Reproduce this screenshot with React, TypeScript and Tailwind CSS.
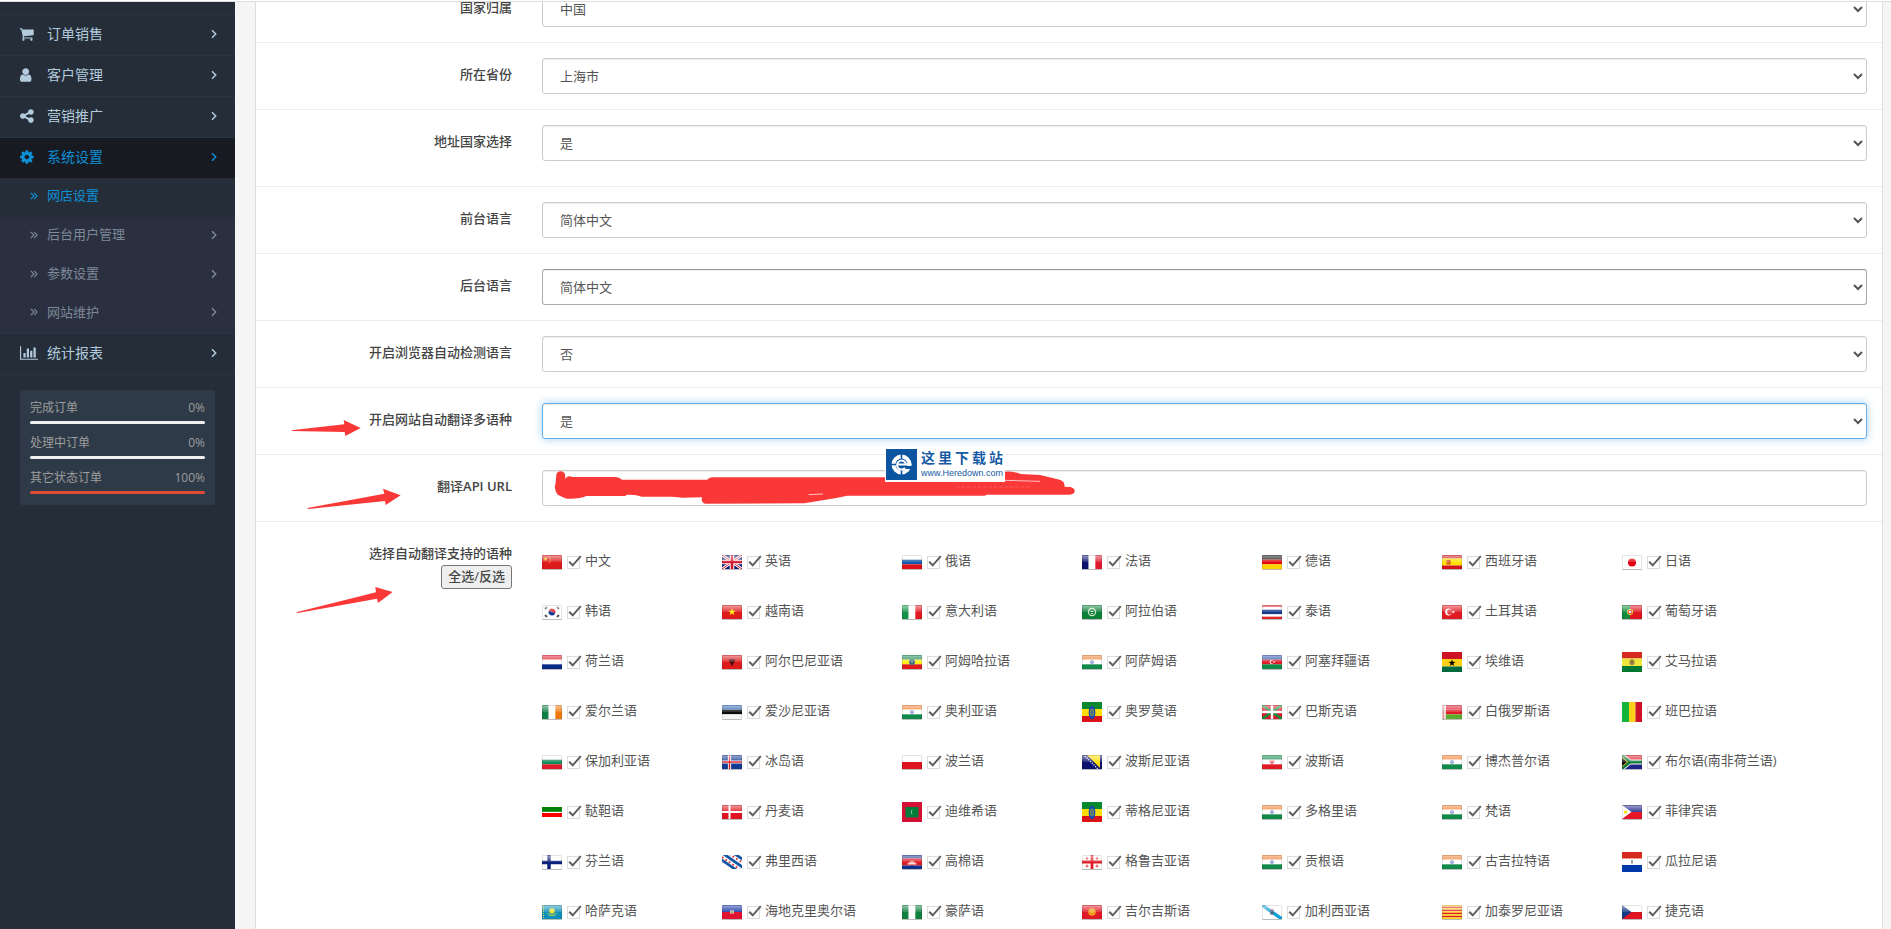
import React from "react";
import type { ReactNode } from "react";

type IconProps = { path: string; box?: string; className?: string };

const Glyph = ({ path, box = "128 0 1792 1792", className = "size-4" }: IconProps) => (
  <svg viewBox={box} className={className} fill="currentColor" aria-hidden="true">
    <path d={path} />
  </svg>
);

const CART =
  "M640 1536q0 52-38 90t-90 38-90-38-38-90 38-90 90-38 90 38 38 90zm896 0q0 52-38 90t-90 38-90-38-38-90 38-90 90-38 90 38 38 90zm128-1088v512q0 24-16.5 42.5t-40.5 21.5l-1044 122q13 60 13 70 0 16-24 64h920q26 0 45 19t19 45-19 45-45 19h-1024q-26 0-45-19t-19-45q0-11 8-31.5t16-36 21.5-40 15.5-29.5l-177-823h-204q-26 0-45-19t-19-45 19-45 45-19h256q16 0 28.5 6.5t19.5 15.5 13 24.5 8 26 5.5 29.5 4.5 26h1201q26 0 45 19t19 45z";
const USER =
  "M1536 1399q0 109-62.5 187t-150.5 78h-854q-88 0-150.5-78t-62.5-187q0-85 8.5-160.5t31.5-152 58.5-131 94-89 134.5-34.5q131 128 313 128t313-128q76 0 134.5 34.5t94 89 58.5 131 31.5 152 8.5 160.5zm-256-887q0 159-112.5 271.5t-271.5 112.5-271.5-112.5-112.5-271.5 112.5-271.5 271.5-112.5 271.5 112.5 112.5 271.5z";
const SHARE =
  "M1344 1024q133 0 226.5 93.5t93.5 226.5-93.5 226.5-226.5 93.5-226.5-93.5-93.5-226.5q0-12 2-34l-360-180q-92 86-218 86-133 0-226.5-93.5t-93.5-226.5 93.5-226.5 226.5-93.5q126 0 218 86l360-180q-2-22-2-34 0-133 93.5-226.5t226.5-93.5 226.5 93.5 93.5 226.5-93.5 226.5-226.5 93.5q-126 0-218-86l-360 180q2 22 2 34t-2 34l360 180q92-86 218-86z";
const COG =
  "M1152 896q0-106-75-181t-181-75-181 75-75 181 75 181 181 75 181-75 75-181zm512-109v222q0 12-8 23t-20 13l-185 28q-19 54-39 91 35 50 107 138 10 12 10 25t-9 23q-27 37-99 108t-94 71q-12 0-26-9l-138-108q-44 23-91 38-16 136-29 186-7 28-36 28h-222q-14 0-24.5-8.5t-11.5-21.5l-28-184q-49-16-90-37l-141 107q-10 9-25 9-14 0-25-11-126-114-165-168-7-10-7-23 0-12 8-23 15-21 51-66.5t54-70.5q-27-50-41-99l-183-27q-13-2-21-12.5t-8-23.5v-222q0-12 8-23t19-13l186-28q14-46 39-92-40-57-107-138-10-12-10-24 0-10 9-23 26-36 98.5-107.5t94.5-71.5q13 0 26 10l138 107q44-23 91-38 16-136 29-186 7-28 36-28h222q14 0 24.5 8.5t11.5 21.5l28 184q49 16 90 37l142-107q9-9 24-9 13 0 25 10 129 119 165 170 7 8 7 22 0 12-8 23-15 21-51 66.5t-54 70.5q26 50 41 98l183 28q13 2 21 12.5t8 23.5z";
const CHART =
  "M640 896v512h-256v-512h256zm384-512v1024h-256v-1024h256zm1024 1152v128h-2048v-1536h128v1408h1920zm-640-896v768h-256v-768h256zm384-384v1152h-256v-1152h256z";

const Angle = () => (
  <svg viewBox="0 0 6 10" className="h-[10px] w-[6px]" fill="none" stroke="currentColor" strokeWidth="1.5" aria-hidden="true">
    <path d="M1 1.3 4.7 5 1 8.7" />
  </svg>
);

const DoubleAngle = () => (
  <svg viewBox="0 0 8 8" className="size-2" fill="none" stroke="currentColor" strokeWidth="1.1" aria-hidden="true">
    <path d="M.8.8 4 4 .8 7.2M4 .8 7.2 4 4 7.2" />
  </svg>
);

const subItems = [
  { label: "网店设置", active: true },
  { label: "后台用户管理" },
  { label: "参数设置" },
  { label: "网站维护" },
];

const stats = [
  { label: "完成订单", value: "0%", bar: "bg-[#f0f0f0]" },
  { label: "处理中订单", value: "0%", bar: "bg-[#f0f0f0]" },
  { label: "其它状态订单", value: "100%", bar: "bg-[#e04b36]" },
];

const MenuItem = ({ icon, label, active }: { icon: ReactNode; label: string; active?: boolean }) => (
  <a
    href="#"
    className={
      active
        ? "flex h-[41px] items-center border-t border-[#2a3541] bg-[#171b21] pr-[18px] pb-[2px] pl-5 text-[#0f8fd6]"
        : "flex h-[41px] items-center border-t border-[#2a3541] pr-[18px] pb-[2px] pl-5 text-[#b3cbdd]"
    }
  >
    <span className="w-[27px]">{icon}</span>
    <span className="flex-1">{label}</span>
    <Angle />
  </a>
);

const Sidebar = () => (
  <nav className="w-[235px] shrink-0 bg-[#242d38] pt-3 text-sm">
    <MenuItem icon={<Glyph path={CART} />} label="订单销售" />
    <MenuItem icon={<Glyph path={USER} box="256 0 1792 1792" />} label="客户管理" />
    <MenuItem icon={<Glyph path={SHARE} />} label="营销推广" />
    <MenuItem icon={<Glyph path={COG} />} label="系统设置" active />
    <div className="text-[13px]">
      {subItems.map((item) => (
        <a
          key={item.label}
          href="#"
          className={
            item.active
              ? "flex h-[39px] items-center bg-[#242d38] pr-[18px] pb-1 pl-[30px] text-[#0f8fd6]"
              : "flex h-[39px] items-center bg-[#2a3040] pr-[18px] pb-1 pl-[30px] text-[#7d8898] last:h-[38px]"
          }
        >
          <span className="w-[17px]">
            <DoubleAngle />
          </span>
          <span className="flex-1">{item.label}</span>
          {!item.active && <Angle />}
        </a>
      ))}
    </div>
    <div className="border-b border-[#2a3541]">
      <MenuItem icon={<Glyph path={CHART} box="0 0 2048 1792" className="h-4 w-[18px]" />} label="统计报表" />
    </div>
    <div className="mx-5 mt-[15px] rounded-xs bg-[#2e3a47] px-[10px] pt-2 pb-[11px] text-xs text-[#9d9d9d]">
      {stats.map((s) => (
        <div key={s.label} className="h-[35px] last:h-[26px]">
          <div className="flex h-[23px] items-center justify-between pb-[3px]">
            <span>{s.label}</span>
            <span>{s.value}</span>
          </div>
          <div className={`h-[3px] rounded-xs ${s.bar}`} />
        </div>
      ))}
    </div>
  </nav>
);

/* flags, 20 x 14 */
const h = (...colors: string[]) =>
  colors.map((c, i) => <rect key={i} y={(14 / colors.length) * i} width="20" height={14 / colors.length} fill={c} />);
const v = (...colors: string[]) =>
  colors.map((c, i) => <rect key={i} x={(20 / colors.length) * i} width={20 / colors.length} height="14" fill={c} />);
const star = (cx: number, cy: number, r: number, fill: string) => {
  const pts = Array.from({ length: 10 }, (_, i) => {
    const a = (Math.PI / 5) * i - Math.PI / 2;
    const d = i % 2 ? r * 0.4 : r;
    return `${cx + d * Math.cos(a)},${cy + d * Math.sin(a)}`;
  });
  return <polygon points={pts.join(" ")} fill={fill} />;
};

const india = (
  <>
    {h("#f08030", "#fff", "#128a4a")}
    <circle cx="10" cy="7" r="1.6" fill="#a9b6de" stroke="#6f83c4" strokeWidth=".6" />
  </>
);

const flags: Record<string, ReactNode> = {
  cn: (
    <>
      {h("#de1a1a")}
      {star(3.5, 4, 2.2, "#ffe000")}
      <path d="M6.5 2h1M8 4h1M8 6h1M6.5 7.5h1" stroke="#f5b030" />
    </>
  ),
  gb: (
    <>
      {h("#0a1a6e")}
      <path d="M0 0 20 14M20 0 0 14" stroke="#fff" strokeWidth="2.8" />
      <path d="M0 0 20 14M20 0 0 14" stroke="#d0142c" strokeWidth="1" />
      <path d="M10 0V14M0 7H20" stroke="#fff" strokeWidth="4.6" />
      <path d="M10 0V14M0 7H20" stroke="#d0142c" strokeWidth="2.6" />
    </>
  ),
  ru: h("#fff", "#1557a8", "#e01018"),
  fr: v("#0b1270", "#fff", "#e01a30"),
  de: h("#111", "#e00a10", "#ffd500"),
  es: (
    <>
      {h("#d4101c", "#ffe000", "#ffe000", "#d4101c")}
      <rect x="4.5" y="5" width="4" height="4.5" fill="#c8501e" />
      <path d="M6 6v2.5" stroke="#e9b45c" />
    </>
  ),
  jp: (
    <>
      {h("#fff")}
      <circle cx="10" cy="7.5" r="4" fill="#e00010" />
    </>
  ),
  kr: (
    <>
      {h("#fff")}
      <path d="M6.6 7a3.4 3.4 0 0 1 6.8 0Z" fill="#e01a22" transform="rotate(20 10 7)" />
      <path d="M6.6 7a3.4 3.4 0 0 0 6.8 0Z" fill="#0c3c96" transform="rotate(20 10 7)" />
      <path d="m3 4 2-2M15 2l2 2M3 10l2 2M17 10l-2 2" stroke="#555" strokeWidth="2" />
    </>
  ),
  vn: (
    <>
      {h("#de1a1a")}
      {star(10, 7, 4, "#ffe600")}
    </>
  ),
  it: v("#149246", "#fff", "#e01a22"),
  arab: (
    <>
      {h("#0a8038")}
      <circle cx="10" cy="7" r="3.6" fill="none" stroke="#cfe6c8" strokeWidth="1.2" />
      <path d="M8.5 6.5h3M9 8.5h2" stroke="#cfe6c8" />
    </>
  ),
  th: h("#e0242c", "#fff", "#143a8c", "#143a8c", "#fff", "#e0242c"),
  tr: (
    <>
      {h("#e01a22")}
      <circle cx="6.6" cy="7" r="3.4" fill="#fff" />
      <circle cx="7.8" cy="7" r="2.7" fill="#e3404a" />
      {star(11.3, 7, 1.9, "#fff")}
    </>
  ),
  pt: (
    <>
      {h("#e01420")}
      <rect width="8" height="14" fill="#0f8a3c" />
      <circle cx="8" cy="7" r="3" fill="#e8d83c" />
      <rect x="6.7" y="5.4" width="2.6" height="3.2" fill="#fff" stroke="#d03030" strokeWidth=".8" />
    </>
  ),
  nl: h("#e01a28", "#fff", "#082c86"),
  al: (
    <>
      {h("#de1a1a")}
      <path d="m10 3.5 1 1L13 4l-.5 3.5-1 .5L10 11.5 8.5 8l-1-.5L7 4l2 .5Z" fill="#2b0808" opacity=".85" />
    </>
  ),
  et: (
    <>
      {h("#128a4a", "#ffee10", "#de1a1a")}
      <circle cx="10" cy="7" r="3" fill="#3c6c94" />
      {star(10, 7, 2, "#7f9a6a")}
    </>
  ),
  in: india,
  az: (
    <>
      {h("#2852a8", "#e01a28", "#128a4a")}
      <circle cx="9.5" cy="7" r="1.9" fill="#fff" />
      <circle cx="10.2" cy="7" r="1.5" fill="#e01a28" />
      {star(12.2, 7, 1.3, "#fff")}
    </>
  ),
  ie: v("#0f8044", "#fff", "#f07a0c"),
  ee: h("#2a66b8", "#0a0a0a", "#f6f6f6"),
  eu: (
    <>
      {h("#e01a24")}
      <path d="M0 0 20 14M20 0 0 14" stroke="#0f9040" strokeWidth="2.6" />
      <path d="M10 0V14M0 7H20" stroke="#fff" strokeWidth="2.4" />
    </>
  ),
  by: (
    <>
      {h("#e01a28", "#e01a28", "#5cab2c")}
      <rect width="4" height="14" fill="#f5d8d8" />
      <path d="M1.5 0V14" stroke="#d86a6a" strokeDasharray="1.5 1" />
    </>
  ),
  bg: h("#fff", "#128a5a", "#e01a28"),
  is: (
    <>
      {h("#123c94")}
      <path d="M7.5 0V14M0 7H20" stroke="#fff" strokeWidth="3.2" />
      <path d="M7.5 0V14M0 7H20" stroke="#e01a28" strokeWidth="1.4" />
    </>
  ),
  pl: h("#fff", "#e01420"),
  ba: (
    <>
      {h("#0b1270")}
      <path d="M5 0H18V13Z" fill="#ffdc00" />
      <path d="M3 1 16 14" stroke="#fff" strokeWidth="1.3" strokeDasharray="1.2 1.2" />
    </>
  ),
  ir: (
    <>
      {h("#128a4a", "#fff", "#e01a24")}
      <path d="M10 5v4M8 5.5q.2 3 2 3t2-3" stroke="#e0484c" fill="none" />
    </>
  ),
  za: (
    <>
      {h("#e01a24", "#1c2488")}
      <path d="M-1 0 8 7 -1 14M8 7H20" stroke="#fff" strokeWidth="4.8" fill="none" />
      <path d="M0 2.5 6 7 0 11.5Z" fill="#111" />
      <path d="M-1 0 8 7 -1 14M8 7H20" stroke="#127a3c" strokeWidth="3.2" fill="none" />
      <path d="M0 2.5 5.5 7 0 11.5" stroke="#e8b818" fill="none" />
    </>
  ),
  dk: (
    <>
      {h("#e01420")}
      <path d="M7.5 0V14M0 7H20" stroke="#fff" strokeWidth="2" />
    </>
  ),
  ph: (
    <>
      {h("#1c2488", "#e81428")}
      <path d="M0 0 9.5 7 0 14Z" fill="#fff" />
      <circle cx="3.5" cy="7" r="1.8" fill="#ffe000" />
    </>
  ),
  fi: (
    <>
      {h("#fff")}
      <path d="M7 0V14M0 7.5H20" stroke="#0b1f78" strokeWidth="3.4" />
    </>
  ),
  kh: (
    <>
      {h("#10308c", "#e01a28", "#e01a28", "#10308c")}
      <path d="M5.5 9.5V8.5h1V7h1v1h1V5.500h1V7h1V5.500h1V8h1V7h1v1.500h1v1Z" fill="#fbdde0" />
    </>
  ),
  ge: (
    <>
      {h("#fff")}
      <path d="M10 0V14M0 7H20" stroke="#e01a24" strokeWidth="2.8" />
      <path d="M5 2v3M3.5 3.5h3M15 2v3M13.5 3.5h3M5 9.5v3M3.5 11h3M15 9.5v3M13.5 11h3" stroke="#e04c50" />
    </>
  ),
  kz: (
    <>
      {h("#1090b4")}
      <circle cx="10" cy="6" r="2.7" fill="#f5e02c" />
      <path d="M5.5 8.5q4.5 4 9 0" stroke="#d8d848" fill="none" />
      <path d="M1.5 0V14" stroke="#d8d848" strokeDasharray="1 1" />
    </>
  ),
  ht: (
    <>
      {h("#1434a4", "#e01430")}
      <rect x="8" y="5.5" width="4" height="3" fill="#f5f0e4" />
      <path d="M8.5 7h3" stroke="#7a8a50" strokeWidth="1.5" />
    </>
  ),
  ng: v("#108040", "#fff", "#108040"),
  kg: (
    <>
      {h("#e01a24")}
      <circle cx="10" cy="7" r="3.8" fill="#f5a020" />
      <circle cx="10" cy="7" r="2" fill="#f8c028" stroke="#dd6c20" strokeWidth=".6" />
    </>
  ),
  gl: (
    <>
      {h("#fff")}
      <path d="M0 0 20 14" stroke="#10a0d8" strokeWidth="3.4" />
      <rect x="8.2" y="4.2" width="3.6" height="5.6" rx="1.5" fill="#4f6f8c" />
      <path d="M9 4.5h2" stroke="#c86a50" />
    </>
  ),
  ct: h("#ffd81c", "#e01a20", "#ffd81c", "#e01a20", "#ffd81c", "#e01a20", "#ffd81c", "#e01a20", "#ffd81c"),
  cz: (
    <>
      {h("#fff", "#e01420")}
      <path d="M0 0 9.5 7 0 14Z" fill="#123a88" />
    </>
  ),
};

/* flat flags without gloss, [height, drawing] */
const ethiopia = (
  <>
    <rect width="20" height="7" fill="#078930" />
    <rect y="7" width="20" height="7" fill="#fcdd09" />
    <rect y="14" width="20" height="6" fill="#da121a" />
    <ellipse cx="10" cy="10.5" rx="3.3" ry="6.8" fill="#0f47af" />
    <ellipse cx="10" cy="10.5" rx="1.6" ry="3.6" fill="none" stroke="#b5b13c" strokeWidth=".8" />
    <path d="M10 7v7" stroke="#7c9060" />
  </>
);

const flatFlags: Record<string, [number, ReactNode]> = {
  gh: [
    20,
    <>
      <rect width="20" height="7" fill="#ce1126" />
      <rect y="7" width="20" height="7.5" fill="#fcd116" />
      <rect y="14.5" width="20" height="5.5" fill="#006b3f" />
      {star(10, 11, 3.6, "#000")}
    </>,
  ],
  bo: [
    20,
    <>
      <rect width="20" height="6.5" fill="#d52b1e" />
      <rect y="6.5" width="20" height="7.5" fill="#f0e63c" />
      <rect y="14" width="20" height="6" fill="#007934" />
      <ellipse cx="10" cy="10.3" rx="2.5" ry="3" fill="#8a9048" />
      <ellipse cx="10" cy="10.3" rx="1.2" ry="1.6" fill="#b7683c" />
    </>,
  ],
  om: [20, ethiopia],
  ml: [
    20,
    <>
      <rect width="7" height="20" fill="#14b53a" />
      <rect x="7" width="6.5" height="20" fill="#fcd116" />
      <rect x="13.5" width="6.5" height="20" fill="#ce1126" />
    </>,
  ],
  tt: [
    10,
    <>
      <rect width="20" height="10" fill="#fff" />
      <rect width="20" height="4.8" fill="#008000" />
      <rect y="6" width="20" height="4" fill="#f00" />
    </>,
  ],
  mv: [
    20,
    <>
      <rect width="20" height="20" fill="#d21034" />
      <rect x="3.5" y="5" width="13" height="10.5" fill="#007e3a" />
      <path d="M10.8 7.5a3 3 0 0 0 0 5.5 4 4 0 0 1 0-5.5Z" fill="#fff" />
    </>,
  ],
  fy: [
    14,
    <>
      <rect width="20" height="14" fill="#fff" />
      <path d="M-4-5 26 16M-6 1 20 19M4-7 32 12" stroke="#1358a4" strokeWidth="2.8" />
      <path d="M0 2 18 14.5M7-1 21 8" stroke="#e8383c" strokeWidth="1.8" strokeDasharray="1.8 2.4" />
    </>,
  ],
  py: [
    20,
    <>
      <rect width="20" height="20" fill="#fff" />
      <rect width="20" height="6.5" fill="#d52b1e" />
      <rect y="13" width="20" height="7" fill="#0038a8" />
      <path d="M10 8v3.5" stroke="#8fa080" strokeWidth="1.8" />
    </>,
  ],
};

const Flag = ({ code }: { code: string }) => {
  const flat = flatFlags[code];
  if (flat) {
    return (
      <svg viewBox={`0 0 20 ${flat[0]}`} width="20" height={flat[0]} aria-hidden="true">
        {flat[1]}
      </svg>
    );
  }
  return (
    <svg viewBox="0 0 20 15" width="20" height="15" className="overflow-hidden rounded-[1px]" aria-hidden="true">
      <defs>
        <linearGradient id="gloss" x1="0" y1="0" x2="0" y2="1">
          <stop offset="0" stopColor="#fff" stopOpacity=".3" />
          <stop offset=".2" stopColor="#fff" stopOpacity=".5" />
          <stop offset="1" stopColor="#fff" stopOpacity=".12" />
        </linearGradient>
        <clipPath id="cloth">
          <rect width="20" height="14" />
        </clipPath>
      </defs>
      <g clipPath="url(#cloth)">{flags[code]}</g>
      <rect width="20" height="7" fill="url(#gloss)" />
      <rect x=".5" y=".5" width="19" height="14" rx=".5" fill="none" stroke="#000" strokeOpacity=".1" />
      <rect y="14" width="20" height="1" fill="#bbb" />
    </svg>
  );
};

const languages: [string, string][] = [
  ["cn", "中文"], ["gb", "英语"], ["ru", "俄语"], ["fr", "法语"], ["de", "德语"], ["es", "西班牙语"], ["jp", "日语"],
  ["kr", "韩语"], ["vn", "越南语"], ["it", "意大利语"], ["arab", "阿拉伯语"], ["th", "泰语"], ["tr", "土耳其语"], ["pt", "葡萄牙语"],
  ["nl", "荷兰语"], ["al", "阿尔巴尼亚语"], ["et", "阿姆哈拉语"], ["in", "阿萨姆语"], ["az", "阿塞拜疆语"], ["gh", "埃维语"], ["bo", "艾马拉语"],
  ["ie", "爱尔兰语"], ["ee", "爱沙尼亚语"], ["in", "奥利亚语"], ["om", "奥罗莫语"], ["eu", "巴斯克语"], ["by", "白俄罗斯语"], ["ml", "班巴拉语"],
  ["bg", "保加利亚语"], ["is", "冰岛语"], ["pl", "波兰语"], ["ba", "波斯尼亚语"], ["ir", "波斯语"], ["in", "博杰普尔语"], ["za", "布尔语(南非荷兰语)"],
  ["tt", "鞑靼语"], ["dk", "丹麦语"], ["mv", "迪维希语"], ["om", "蒂格尼亚语"], ["in", "多格里语"], ["in", "梵语"], ["ph", "菲律宾语"],
  ["fi", "芬兰语"], ["fy", "弗里西语"], ["kh", "高棉语"], ["ge", "格鲁吉亚语"], ["in", "贡根语"], ["in", "古吉拉特语"], ["py", "瓜拉尼语"],
  ["kz", "哈萨克语"], ["ht", "海地克里奥尔语"], ["ng", "豪萨语"], ["kg", "吉尔吉斯语"], ["gl", "加利西亚语"], ["ct", "加泰罗尼亚语"], ["cz", "捷克语"],
];

const Language = ({ code, name }: { code: string; name: string }) => (
  <label className="flex h-[50px] w-[180px] items-center whitespace-nowrap">
    <Flag code={code} />
    <span className="relative mr-[5px] ml-[5px] size-[13px]">
      <input
        type="checkbox"
        defaultChecked
        className="peer block size-[13px] appearance-none border border-[#dcdcdc] bg-white"
      />
      <svg
        viewBox="0 0 14 14"
        className="pointer-events-none absolute -top-px left-px hidden size-[14px] peer-checked:block"
        fill="none"
        stroke="#5f5f5f"
        strokeWidth="2"
        aria-hidden="true"
      >
        <path d="M1.2 6.8 4.7 10.3 12.8 1.2" />
      </svg>
    </span>
    <span className="pb-[2px]">{name}</span>
  </label>
);

const Arrow = ({ box, points, className }: { box: string; points: string; className: string }) => (
  <svg viewBox={box} className={`pointer-events-none absolute ${className}`} aria-hidden="true">
    <polygon points={points} fill="#fb3838" />
  </svg>
);

const field = "block h-9 w-full rounded-[3px] border bg-white px-[13px] text-[13px] text-[#555] outline-none";
const plain = "border-[#ccc] shadow-[inset_0_1px_1px_rgba(0,0,0,0.075)]";
const hovered = "border-[#aaa] border-t-[#999] shadow-[inset_0_1px_1px_rgba(0,0,0,0.075)]";
const focused = "border-[#66afe9] shadow-[inset_0_1px_1px_rgba(0,0,0,0.075),0_0_8px_rgba(102,175,233,0.6)]";

type RowProps = { id: string; label: ReactNode; children: ReactNode; last?: boolean; extra?: ReactNode };

const Row = ({ id, label, children, last, extra }: RowProps) => (
  <div className={last ? "relative flex border-t border-[#ededed] pt-[15px] pb-[25px]" : "relative flex border-t border-[#ededed] py-[15px]"}>
    <label htmlFor={id} className="w-1/6 px-[15px] pt-[7px] text-right leading-[18px] font-medium text-[#444]">
      {label}
    </label>
    <div className="w-5/6 px-[15px]">{children}</div>
    {extra}
  </div>
);

const Choice = ({ id, options, look = plain }: { id: string; options: string[]; look?: string }) => (
  <select id={id} className={`${field} ${look}`}>
    {options.map((o) => (
      <option key={o}>{o}</option>
    ))}
  </select>
);

const Scribble = () => (
  <svg
    viewBox="6 120 1500 105"
    preserveAspectRatio="none"
    className="pointer-events-none absolute top-0 left-0 h-[35px] w-[536px]"
    aria-hidden="true"
  >
    <path
      d="M46 136C46 120 70 120 71 136V148Q76 134 92 141H212Q222 142 230 149H468Q474 142 484 142H966L1302 125Q1325 122 1345 132L1400 135 1455 149Q1470 154 1468 170L1485 171Q1497 175 1497 184 1495 194 1482 194H1250Q1245 199 1230 197H860L830 204 740 220 462 221Q450 216 454 202L400 203 370 200H285Q270 193 245 194L238 198H130Q110 208 75 206 60 200 50 194 38 178 44 160Z"
      fill="#fb3838"
    />
    <path d="M752 194 792 192M1302 151 1400 154" stroke="#fff" strokeWidth="2" />
    <path d="M1165 171H1370" stroke="#fa6a6a" strokeWidth="2" strokeDasharray="10 5" />
  </svg>
);

const Watermark = () => (
  <div className="absolute -top-[7px] left-[629px] flex h-[34px] w-[120px] items-start bg-white pt-px pl-px">
    <svg viewBox="0 0 31 31" className="size-[31px] shrink-0" aria-hidden="true">
      <rect width="31" height="31" fill="#0b55a0" />
      <circle cx="15.5" cy="15.5" r="8" fill="none" stroke="#fff" strokeWidth="4" />
      <path d="M15.5 4v6M15.500 21v6M4 15.500h6" stroke="#0b55a0" strokeWidth="1.6" />
      <path d="M19 17h8v3h-8z" fill="#0b55a0" />
      <path d="M11 15.500h14.500M19 19a4.500 4.500 0 1 1 1-3.500" fill="none" stroke="#fff" strokeWidth="2" />
    </svg>
    <div className="pl-1 text-[#1659a5]">
      <div className="flex w-[82px] justify-between text-sm leading-[18px] font-bold">
        <span>这</span>
        <span>里</span>
        <span>下</span>
        <span>载</span>
        <span>站</span>
      </div>
      <div className="font-['Liberation_Sans',sans-serif] text-[9px] leading-3 whitespace-nowrap">www.Heredown.com</div>
    </div>
  </div>
);

const App = () => {
  return (
    <div className="flex h-screen flex-col overflow-hidden bg-[#f5f5f5] font-['Open_Sans','Noto_Sans_CJK_SC',sans-serif] text-[13px] text-[#555]">
      <header className="h-[2px] shrink-0 border-b border-[#ddd] bg-white" />
      <div className="flex min-h-0 flex-1">
        <Sidebar />
        <main className="min-w-0 flex-1 overflow-hidden pr-2 pl-5">
          {/* the form is scrolled, its first row is partly under the top edge */}
          <form className="-mt-[27px] border-x border-[#ddd] bg-white">
            <Row id="country" label="国家归属">
              <Choice id="country" options={["中国"]} />
            </Row>
            <Row id="zone" label="所在省份">
              <Choice id="zone" options={["上海市"]} />
            </Row>
            <Row id="address-country" label="地址国家选择" last>
              <Choice id="address-country" options={["是", "否"]} />
            </Row>
            <Row id="front-language" label="前台语言">
              <Choice id="front-language" options={["简体中文"]} />
            </Row>
            <Row id="admin-language" label="后台语言">
              <Choice id="admin-language" options={["简体中文"]} look={hovered} />
            </Row>
            <Row id="detect" label="开启浏览器自动检测语言">
              <Choice id="detect" options={["否", "是"]} />
            </Row>
            <Row
              id="translate"
              label="开启网站自动翻译多语种"
              extra={
                <Arrow
                  box="63 120 210 48"
                  points="64,151 223,133 221,120 272,144 226,168 224,156 66,153"
                  className="top-8 left-[35px] h-4 w-[70px]"
                />
              }
            >
              <Choice id="translate" options={["是", "否"]} look={focused} />
            </Row>
            <Row
              id="api"
              label={
                <>
                  翻译<span className="font-semibold">API URL</span>
                </>
              }
              extra={
                <>
                  <Arrow
                    box="111 324 282 66"
                    points="112,384 343,341 339,326 392,346 347,375 345,363 115,387"
                    className="top-[33px] left-[51px] h-[22px] w-[94px]"
                  />
                  <Watermark />
                </>
              }
            >
              <div className="relative">
                <input id="api" type="text" className={`${field} ${plain}`} />
                <Scribble />
              </div>
            </Row>
            <div className="relative flex border-t border-[#ededed] py-[15px]">
              <div className="w-1/6 px-[15px] pt-[7px] text-right leading-[18px] font-medium text-[#444]">
                <div id="languages">选择自动翻译支持的语种</div>
                <button
                  type="button"
                  className="mt-[3px] h-6 rounded-[3px] border border-[#767676] bg-[#efefef] px-[6px] pb-[2px] leading-[18px] font-medium"
                >
                  全选/反选
                </button>
              </div>
              <div role="group" aria-labelledby="languages" className="flex w-5/6 flex-wrap px-[15px]">
                {languages.map(([code, name]) => (
                  <Language key={name} code={code} name={name} />
                ))}
              </div>
              <Arrow
                box="78 618 294 84"
                points="79,697 318,637 316,621 368,636 324,669 321,656 83,699"
                className="top-16 left-10 h-[28px] w-[98px]"
              />
            </div>
          </form>
        </main>
      </div>
    </div>
  );
};

export default App;
